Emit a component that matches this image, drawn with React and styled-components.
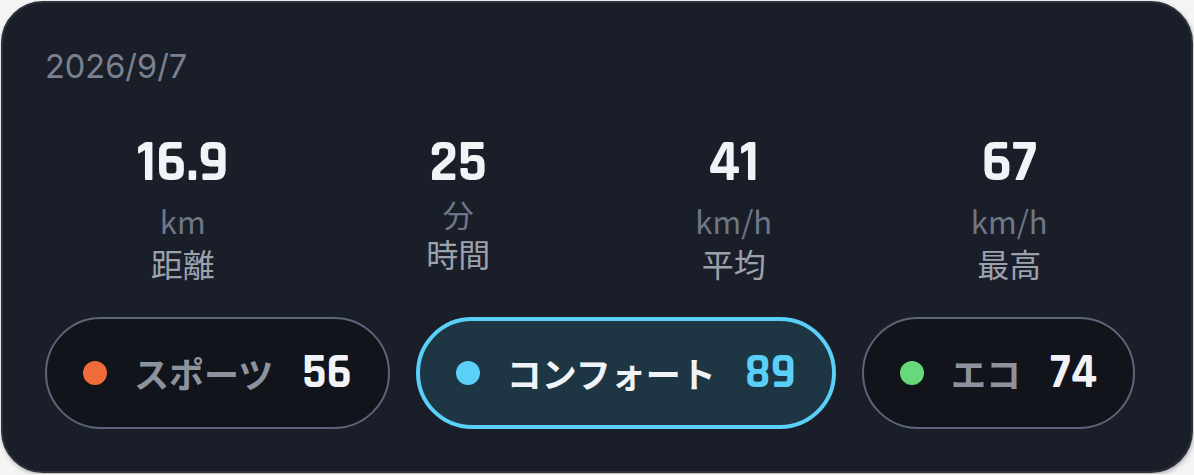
import React from "react";
import styled, { createGlobalStyle } from "styled-components";

const GlobalStyle = createGlobalStyle`
  html, body { margin: 0; padding: 0; background: #f4f4f5; }
  #root { padding: 1px; }
`;

const Card = styled.section`
  box-sizing: border-box;
  width: 1192px;
  height: 472px;
  background: #1a1e29;
  border: 2px solid #2c313c;
  border-radius: 42px;
  box-shadow: 1px 2px 4px rgba(0, 0, 0, 0.25);
  padding: 44px 44px 0 42px;
  display: flex;
  flex-direction: column;
  font-family: "Inter", "Noto Sans CJK JP", sans-serif;
`;

const DateText = styled.div`
  font-size: 32.5px;
  line-height: 40px;
  color: #7a818f;
`;

const Stats = styled.div`
  display: grid;
  grid-template-columns: repeat(4, 1fr);
  margin-top: 45px;
`;

const Stat = styled.div`
  display: flex;
  flex-direction: column;
  align-items: center;
`;

const Value = styled.div`
  font-family: "Rajdhani", sans-serif;
  font-weight: 700;
  font-size: 58px;
  line-height: 62px;
  color: #f1f3f7;
`;

const Unit = styled.div`
  margin-top: ${(p) => (p.$cjk ? "1px" : "5px")};
  font-family: "Noto Sans CJK JP", sans-serif;
  font-size: 31px;
  line-height: ${(p) => (p.$cjk ? "38px" : "44px")};
  color: #6f7787;
`;

const Label = styled.div`
  font-family: "Noto Sans CJK JP", sans-serif;
  font-size: 32px;
  line-height: 40px;
  color: #9ca2ad;
`;

const Modes = styled.div`
  display: flex;
  gap: 26px;
  margin-top: 34px;
`;

const Pill = styled.div`
  box-sizing: border-box;
  height: 112px;
  display: flex;
  align-items: center;
  padding: 0 36px;
  border-radius: 56px;
  border: ${(p) => (p.$active ? "4px solid #5acff7" : "2px solid #5b6577")};
  background: ${(p) => (p.$active ? "#1e3544" : "#11141b")};
`;

const Dot = styled.span`
  width: 24px;
  height: 24px;
  border-radius: 50%;
  background: ${(p) => p.$color};
  flex: none;
`;

const ModeName = styled.span`
  margin-left: 27px;
  font-family: "Noto Sans CJK JP", sans-serif;
  font-weight: 700;
  font-size: 35px;
  line-height: 40px;
  color: ${(p) => (p.$active ? "#f1f3f7" : "#8c929e")};
`;

const Score = styled.span`
  margin-left: 29px;
  font-family: "Rajdhani", sans-serif;
  font-weight: 700;
  font-size: 48px;
  line-height: 40px;
  color: ${(p) => (p.$active ? "#5acff7" : "#f1f3f7")};
`;

const stats = [
  { value: "16.9", unit: "km", label: "距離" },
  { value: "25", unit: "分", label: "時間", cjk: true },
  { value: "41", unit: "km/h", label: "平均" },
  { value: "67", unit: "km/h", label: "最高" },
];

const modes = [
  { name: "スポーツ", score: 56, color: "#f06a3a" },
  { name: "コンフォート", score: 89, color: "#5acff7", active: true },
  { name: "エコ", score: 74, color: "#67d97a" },
];

export default function App() {
  return (
    <>
      <GlobalStyle />
      <Card>
        <DateText>2026/9/7</DateText>
        <Stats>
          {stats.map((s) => (
            <Stat key={s.label}>
              <Value>{s.value}</Value>
              <Unit $cjk={s.cjk}>{s.unit}</Unit>
              <Label>{s.label}</Label>
            </Stat>
          ))}
        </Stats>
        <Modes>
          {modes.map((m) => (
            <Pill key={m.name} $active={m.active}>
              <Dot $color={m.color} />
              <ModeName $active={m.active}>{m.name}</ModeName>
              <Score $active={m.active}>{m.score}</Score>
            </Pill>
          ))}
        </Modes>
      </Card>
    </>
  );
}
